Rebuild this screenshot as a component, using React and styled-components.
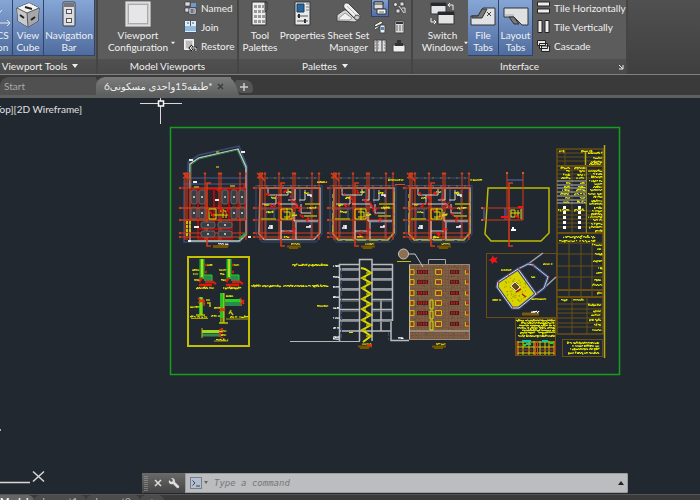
import React from 'react';
import styled, { createGlobalStyle, css } from 'styled-components';

const GlobalStyle = createGlobalStyle`
  * {
    box-sizing: border-box;
  }

  body {
    margin: 0;
    overflow: hidden;
    background: #212830;
    font-family: Lato, "DejaVu Sans", sans-serif;
    font-size: 10px;
    line-height: 12px;
    color: #f0f0f0;
  }

  button, input {
    font: inherit;
    color: inherit;
    margin: 0;
    padding: 0;
    border: 0;
    background: none;
  }

  svg {
    display: block;
    flex: none;
  }
`;

const Window = styled.div`
  display: flex;
  flex-direction: column;
  height: 100vh;
  overflow: hidden;
`;

/* ---------- ribbon ---------- */

const Ribbon = styled.header`
  display: flex;
  flex: none;
  height: 75px;
  background: linear-gradient(#505050, #3f3f3f);
  border-bottom: 1px solid #808080;
`;

const Panel = styled.section`
  display: flex;
  flex-direction: column;
  flex: none;
  width: ${({ $width }) => $width}px;
  margin-left: ${({ $cut }) => ($cut ? -$cut : 0)}px;
  background: #5c5c5c;
  border-right: 2px solid #454545;
`;

const PanelBody = styled.div`
  display: flex;
  flex: 1;
  padding-left: ${({ $indent }) => $indent || 0}px;
`;

const PanelTitle = styled.div`
  display: flex;
  align-items: center;
  justify-content: center;
  gap: 5px;
  height: 15px;
  padding: 0 0 2px ${({ $indent }) => $indent || 0}px;
  position: relative;
  background: linear-gradient(#505050, #4a4a4a);
`;

const Launcher = styled.button`
  position: absolute;
  right: 2px;
  top: 5px;
`;

const BigButton = styled.button`
  display: flex;
  flex-direction: column;
  align-items: center;
  flex: none;
  position: relative;
  width: ${({ $width }) => $width}px;
  height: 56px;
  padding-left: ${({ $indent }) => $indent || 0}px;
  white-space: nowrap;

  ${({ $active }) => $active && css`
    background: linear-gradient(#86a6d6, #4e6c9e);
    border-right: 1px solid #2f4468;
    border-bottom: 1px solid #2f4468;
  `}
`;

const BigIcon = styled.span`
  display: flex;
  height: 29px;
  padding-top: 1px;
`;

const MenuArrow = styled.span`
  position: absolute;
  right: ${({ $right }) => $right || 0}px;
  top: 41px;
`;

const SmallColumn = styled.div`
  display: flex;
  flex-direction: column;
  align-items: flex-start;
  margin-left: ${({ $left }) => $left || 0}px;
  margin-top: -2px;
`;

const SmallButton = styled.button`
  display: flex;
  align-items: center;
  gap: 4px;
  height: 19px;
  padding: 0 2px;
  white-space: nowrap;

  ${({ $active }) => $active && css`
    background: linear-gradient(#86a6d6, #4e6c9e);
    box-shadow: inset 0 0 0 1px #2f4468;
  `}
`;

/* ---------- file tabs ---------- */

const FileTabs = styled.nav`
  display: flex;
  align-items: flex-end;
  flex: none;
  height: 23px;
  background: #3a3a3a;
  border-bottom: 3px solid #5e6060;
`;

const FileTab = styled.div`
  display: flex;
  align-items: center;
  position: relative;
  z-index: ${({ $active }) => ($active ? 1 : 0)};
  height: 18px;
  width: ${({ $width }) => $width}px;
  padding-left: ${({ $active }) => ($active ? 8 : 4)}px;
  gap: 4px;
  color: ${({ $active }) => ($active ? '#f0f0f0' : '#a8a8a8')};
  background: ${({ $active }) => ($active ? 'linear-gradient(#7b7b7b, #5e6060)' : '#505050')};
  border-radius: 9px 0 0 0;

  &::after {
    content: '';
    position: absolute;
    top: 0;
    right: -5px;
    width: 14px;
    height: 18px;
    z-index: -1;
    background: inherit;
    border-radius: 0 7px 0 0;
    transform: skewX(20deg);
  }
`;

const TabName = styled.button`
  white-space: nowrap;
`;

const NewTab = styled.button`
  display: flex;
  align-items: center;
  justify-content: center;
  width: 18px;
  height: 13px;
  margin: 0 0 2px 4px;
  border-radius: 3px 8px 3px 8px;
  background: #555;
`;

/* ---------- drawing area ---------- */

const Canvas = styled.main`
  flex: 1;
  min-height: 0;
  position: relative;
  overflow: hidden;
  background: #212830;
`;

const ViewLabel = styled.div`
  position: absolute;
  left: -18px;
  top: 5px;
  color: #e0e0e0;
  white-space: nowrap;
`;

const CommandBar = styled.form`
  display: flex;
  position: absolute;
  left: 142px;
  right: 72px;
  bottom: 1px;
  height: 20px;
  background: #bcbdbf;
  border-radius: 2px;
  overflow: hidden;
`;

const CommandTools = styled.div`
  display: flex;
  align-items: center;
  gap: 6px;
  width: 43px;
  padding-left: 2px;
  background: linear-gradient(#6a6a6a, #444);
`;

const CommandField = styled.label`
  display: flex;
  align-items: center;
  flex: 1;
  gap: 6px;
  padding: 0 3px 0 4px;
  border: 1px solid #9a9c9e;
`;

const CommandInput = styled.input`
  flex: 1;
  min-width: 0;
  font: italic 9px/12px "DejaVu Sans Mono", monospace;
  color: #333;
  outline: none;

  &::placeholder {
    color: #777;
    opacity: 1;
  }
`;

const LayoutTabs = styled.footer`
  display: flex;
  flex: none;
  height: 6px;
  overflow: hidden;
  background: #3a3a3a;
  border-top: 1px solid #555;
`;

const LayoutTab = styled.button`
  flex: none;
  height: 12px;
  width: ${({ $width }) => $width}px;
  padding-right: ${({ $active }) => ($active ? 8 : 0)}px;
  color: ${({ $active }) => ($active ? '#fff' : '#bbb')};
  font-weight: ${({ $active }) => ($active ? 700 : 400)};
  background: ${({ $active }) => ($active ? '#666' : '#4c4c4c')};
  border-radius: ${({ $active }) => ($active ? 0 : 6)}px 6px 0 0;
`;

/* ---------- icons ---------- */

const Down = ({ size = 6 }) => (
  <svg width={size} height="4" viewBox="0 0 6 4"><path d="M0 0h6L3 4z" fill="#eee" /></svg>
);

const UcsIcon = () => (
  <svg width="28" height="27" viewBox="0 0 28 27" fill="none" stroke="#e8e8e8">
    <path d="M5 4v18h20M22 19l3 3-3 3M5 22L17 9" />
  </svg>
);

const CubeIcon = () => (
  <svg width="26" height="27" viewBox="0 0 26 27">
    <path d="M2 7l12-5 10 5-1 13-10 6-10-6z" fill="#ddd" stroke="#333" />
    <path d="M2 7l10 5 1 14-10-6z" fill="#c7c9cc" />
    <path d="M12 12l12-5-1 13-10 6z" fill="#a5a7aa" />
    <path d="M2 7l12-5 10 5-12 5z" fill="#f4f4f4" />
    <path d="M2 7l10 5 12-5M12 12l1 14" fill="none" stroke="#555" />
    <path d="M10 6l7 2M5 14l4 3M16 19l4-3" stroke="#222" strokeWidth="2" />
  </svg>
);

const NavIcon = () => (
  <svg width="14" height="27" viewBox="0 0 14 27">
    <rect x="1" y="1" width="12" height="24" rx="1" fill="#dcdde0" stroke="#35383d" />
    <path d="M2 2h10v4H2z" fill="#73777d" />
    <g fill="#eee" stroke="#555"><rect x="4.500" y="8.500" width="5" height="4" /><rect x="4.500" y="17.500" width="5" height="4" /></g>
  </svg>
);

const ViewportIcon = () => (
  <svg width="26" height="27" viewBox="0 0 26 27">
    <rect x="1" y="1" width="24" height="24" fill="#c9cacc" stroke="#f3f3f3" />
    <rect x="3.500" y="3.500" width="19" height="19" fill="#e6e6e8" stroke="#aaa" />
  </svg>
);

const NamedIcon = () => (
  <svg width="13" height="14" viewBox="0 0 13 14">
    <path d="M1 1h5v4H1zM1 7h4v4H1z" fill="#d7dce2" stroke="#333" strokeWidth=".6" />
    <path d="M7 2h5v4H7z" fill="#6b9bc9" /><path d="M5 7h7v6H5z" fill="#eee" stroke="#334" strokeWidth=".7" />
    <path d="M6 9h5M6 11h5M8 8v4" stroke="#3d4c60" />
  </svg>
);

const JoinIcon = () => (
  <svg width="13" height="13" viewBox="0 0 13 13">
    <path d="M.5.5h12v12H.5z" fill="#e8edf2" stroke="#46576b" />
    <path d="M1 6h11v5H1z" fill="#8dbce0" /><path d="M6.500 1v5M3 3h2M8 3h2" stroke="#46576b" />
  </svg>
);

const RestoreIcon = () => (
  <svg width="13" height="13" viewBox="0 0 13 13">
    <path d="M.5.500h9v10h-9z" fill="#ddd" stroke="#f4f4f4" /><path d="M2 2h6v7H2z" fill="#bbb" />
    <path d="M12 12V9H6M8.500 6.500L6 9l2.500 2.500" fill="none" stroke="#222" strokeWidth="2.500" />
    <path d="M12 12V9H6M8.500 6.500L6 9l2.500 2.500" fill="none" stroke="#eee" />
  </svg>
);

const PaletteIcon = () => (
  <svg width="18" height="26" viewBox="0 0 18 26">
    <path d="M1 1h14v23H1z" fill="#ececec" stroke="#333" /><path d="M14 1h2v8l-2 2z" fill="#777" stroke="#333" />
    {[4, 9, 14, 19].map((y) => [3, 7, 11].map((x) => (
      <rect key={`${x}-${y}`} x={x} y={y} width="3" height="3" fill="#999" />
    )))}
  </svg>
);

const PropertiesIcon = () => (
  <svg width="18" height="26" viewBox="0 0 18 26">
    <path d="M1 1h15v23H1z" fill="#e9e9e9" stroke="#333" />
    <path d="M3 3h7v8H3z" fill="#29669d" stroke="#173b60" /><path d="M12 3h3M12 6h3M12 9h3" stroke="#777" />
    <path d="M3 15h11M3 20h11" stroke="#555" /><path d="M5 13v4M11 18v4" stroke="#234" strokeWidth="2" />
  </svg>
);

const SheetIcon = () => (
  <svg width="26" height="26" viewBox="0 0 26 26">
    <path d="M1 20V14l7-5h4l12 9-5 3z" fill="#d2d4d7" stroke="#444" />
    <path d="M3 17l6-5 7 5-2 2H3z" fill="#f2f2f2" stroke="#999" />
    <path d="M8 4c0-2 3-3 5-1l11 11c1 3-1 5-4 5L9 8C8 7 7 5 8 4z" fill="#f0f0f0" stroke="#444" />
    <path d="M11 5l11 11M9 7l11 11" stroke="#b4b6b9" /><circle cx="21" cy="16.500" r="2.500" fill="#c4c6c9" stroke="#555" />
  </svg>
);

const SwitchIcon = () => (
  <svg width="26" height="27" viewBox="0 0 26 27">
    <g stroke="#333" fill="#e2e3e5"><path d="M1 2h15v11H1z" /><path d="M8 11h16v12H8z" /></g>
    <path d="M1 2h15v3H1zM8 11h16v3H8z" fill="#25282c" />
    <path d="M18 4h5v5M20 2l-2 2 2 2M1 17v4h5M4 19l2 2-2 2" fill="none" stroke="#eee" />
  </svg>
);

const FileTabIcon = () => (
  <svg width="26" height="27" viewBox="0 0 26 27">
    <path d="M1 24v-9h7l5-8h12v17z" fill="#e1e2e4" stroke="#333" />
    <path d="M2 15h6l4-7h5l-5 9H2z" fill="#777" stroke="#333" />
    <path d="M17 11l4 4M21 11l-4 4" stroke="#444" />
  </svg>
);

const LayoutTabIcon = () => (
  <svg width="26" height="27" viewBox="0 0 26 27">
    <path d="M1 7h24v17h-6l-8-8H1z" fill="#dfe0e2" stroke="#333" />
    <path d="M6 16h5l5 7h-5z" fill="#777" stroke="#333" /><path d="M2 14h9" stroke="#aaa" />
  </svg>
);

const Tile = ({ vertical }) => (
  <svg width="13" height="13" viewBox="0 0 13 13">
    <g transform={vertical ? 'rotate(90 6.500 6.500)' : undefined} fill="#eee" stroke="#222">
      <path d="M.5 1h12v4H.5zM.5 8h12v4H.5z" />
    </g>
  </svg>
);

const CascadeIcon = () => (
  <svg width="13" height="13" viewBox="0 0 13 13" fill="#e6e6e6" stroke="#222">
    <path d="M.5 1.500h8v5h-8zM2.500 4.500h8v5h-8zM4.500 7h8v5.500h-8z" />
  </svg>
);

const paletteIcons = [
  <><path d="M1 1h9v7H1z" fill="#ddd" stroke="#333" /><path d="M1 1h9v2H1zM4 8h9v5H4z" fill="#f4f4f4" stroke="#333" /><path d="M6 11h5" stroke="#666" /></>,
  <><path d="M1 3l3-2 2 3-3 2zM8 1h4v4H8zM4 8h4v4H4z" fill="#ddd" stroke="#444" /><path d="M7 5l5 7M10 7h3v5" stroke="#ddd" fill="none" /></>,
  <><path d="M1 5l7-4 2 2-7 4zM1 8l5-3v2L2 10z" fill="#eee" stroke="#444" /><path d="M7 5h5v8H7z" fill="#eee" stroke="#444" /><path d="M8 7h3v3H8z" fill="#4a88c4" /></>,
  <><path d="M3 1h9v12H3z" fill="#ddd" stroke="#444" /><path d="M4 3h7" stroke="#333" strokeWidth="2" /><path d="M4 6h7M4 8h7M4 10h7" stroke="#666" strokeDasharray="2 1" /></>,
  <><path d="M1 1h12v12H1z" fill="#ddd" stroke="#444" /><path d="M4 1v12M9 1v12" stroke="#444" /><path d="M2 3h10M2 6h10M2 9h10" stroke="#777" strokeDasharray="1 2" /></>,
  <><path d="M1 6h12v7H1z" fill="#eee" stroke="#444" /><path d="M5 1h4v3h2v3H3V4h2z" fill="#333" /></>,
];

const MiniPalette = ({ index }) => (
  <svg width="14" height="14" viewBox="0 0 14 14">{paletteIcons[index]}</svg>
);

/* ---------- CAD drawing ---------- */

const YELLOW = '#dede00';
const RED = '#d93a16';
const BROWN = '#6b4e10';
const BLUE = '#3b4a78';
const WHITE = '#d4d4d4';

const rng = (seed) => {
  let s = seed * 7919 + 17;
  return () => {
    s = (s * 16807) % 2147483647;
    return s / 2147483647;
  };
};

// annotation too small to resolve at this zoom level, drawn as pen marks
const Note = ({ x, y, w, h = 2, color = YELLOW, seed }) => {
  const next = rng(seed || Math.round(x * 3 + y * 5));
  let d = '';
  for (let i = 0; i < w; i += 1) {
    const r = next();
    if (r > 0.08) {
      d += `M${x + i} ${(y + (next() - 0.5) * h * 0.4).toFixed(1)}h1.200`;
    }
    if (r > 0.65) {
      d += `M${x + i} ${(y + (next() - 0.5) * h).toFixed(1)}h1.500`;
    }
  }
  return <path d={d} stroke={color} strokeWidth="1.200" fill="none" />;
};

const Notes = ({ x, w, rows, h, color }) => rows.map((y, i) => {
  const cut = (i * 5) % 7;
  return <Note key={y} x={x + cut} y={y} w={w - cut} h={h} color={color} />;
});

const Caption = ({ x, y }) => (
  <g>
    <Note x={x + 4} y={y - 1} w={9} color="#c4bf00" />
    <path d={`M${x} ${y + 1.5}h14M${x + 2} ${y + 3}h9`} stroke="#765400" strokeWidth="2" />
  </g>
);

const Axes = ({ x, cols }) => (
  <g stroke={RED} fill="none">
    <path d={cols.map((c) => `M${x + c} 174V240`).join('')} />
    <path d={[188, 208, 220, 233, 237].map((y) => `M${x} ${y}H${x + 65}`).join('')} />
    <g fill="#ff6a48">
      {cols.map((c) => <circle key={c} cx={x + c} cy="173.500" r=".8" />)}
      {[188, 208, 220, 233, 237].map((y) => <circle key={y} cx={x} cy={y} r=".8" />)}
    </g>
    <path d={`M${x + 3} 173l5 5M${x + 3} 178l6-4M${x + 7} 176l4 5`} strokeWidth="1.500" />
    <path d={`M${x + 31} 183h-4V246h4`} strokeWidth="1.500" />
  </g>
);

const axisCols = [6, 8, 11, 25, 39, 41, 58, 65];

const FloorPlan = ({ x, seed, trim }) => {
  const next = rng(seed);
  const marks = [];
  const spots = [[12, 192], [20, 194], [27, 190], [35, 196], [40, 202], [28, 208], [33, 215], [46, 212], [50, 217], [38, 226], [30, 230], [16, 203], [44, 207], [22, 200]];
  spots.forEach(([sx, sy]) => {
    for (let i = 0; i < 3; i += 1) {
      marks.push(`M${(x + sx + next() * 4).toFixed(1)} ${(sy + next() * 4).toFixed(1)}l${(next() * 3).toFixed(1)} ${(next() * 3).toFixed(1)}`);
    }
  });
  return (
    <g fill="none">
      <path d={`M${x + 4} 178H${x + 66}M${x + 3} 185.500H${x + 68}V234L${x + 62} 242H${x + 8}L${x + 2} 234V185`} stroke={BLUE} />
      <path d={`M${x + 4} 178H${x + 66}M${x + 4} 186H${x + 66}`} stroke="#8b701c" strokeDasharray="2 6" />
      <path d={`M${x + 6} 188H${x + 66}V233L${x + 60} 239.500H${x + 10}L${x + 5} 234Z`} stroke="#b5a89c" strokeWidth="1.500" />
      {trim && <path d={`M${x + 66} 192V233l-6 7H${x + 10}l-5-6v-40`} stroke="#b0ac28" strokeWidth="1.500" strokeDasharray="9 3" />}
      <path d={`M${x + 12} 207v30M${x + 20} 209v10M${x + 57} 190v48M${x + 38} 189v18M${x + 46} 189v14M${x + 7} 209h16M${x + 42} 222h22`} stroke="#4b5c94" />
      <Axes x={x} cols={axisCols} />
      <path d={`M${x + 14} 189v6h8v9h-14M${x + 22} 195h12v-6M${x + 34} 200h7v-11M${x + 45} 200h6v-10M${x + 24} 204h19v4M${x + 47} 204v9h10M${x + 58} 204h8M${x + 40} 212v9h24M${x + 27} 221v18M${x + 42} 222v17M${x + 40} 231h-13`} stroke={WHITE} />
      <path d={marks.join('')} stroke="#e81818" strokeWidth="1.500" />
      <path d={`M${x + 27} 209h11v10h-11zM${x + 30} 212h6v5h-6M${x + 33} 208v12`} stroke={YELLOW} />
      <path d={`M${x + 51} 204h14M${x + 7} 219h15M${x + 50} 216h13`} stroke="#918b12" strokeWidth="2" />
      <Note x={x + 17} y={198} w={5} /><Note x={x + 32} y={192} w={5} />
      <Note x={x + 12} y={212} w={7} /><Note x={x + 53} y={208} w={9} />
      <Note x={x + 29} y={237} w={6} /><Note x={x + 10} y={205} w={5} />
      <Note x={x + 50} y={193} w={5} /><Note x={x + 38} y={215} w={5} />
      <path d={`M${x + 14} 228h4v-3M${x + 15} 226h3v3M${x + 53} 195h4v2M${x + 52} 227h4v-2`} stroke="#fff" strokeWidth="1.500" />
      <Caption x={x + 33} y={245} />
    </g>
  );
};

const cars = [
  [191, 190, 6, 14], [199, 190, 6, 14], [222, 190, 6, 14], [231, 190, 6, 14], [239, 190, 6, 14],
  [191, 207, 6, 12], [199, 207, 6, 12], [231, 207, 6, 12], [239, 207, 6, 12],
  [201, 222, 14, 6], [218, 222, 14, 6], [201, 231, 14, 6], [218, 231, 14, 6],
];

const ParkingPlan = () => (
  <g fill="none">
    <path d="M188 188V162l11-7 40-9 8 20v68l-7 8H184V180M183 178h63M184 184h62" stroke={BLUE} strokeWidth="1.500" />
    <path d="M190 187V164l9-6 39-9 8 18v68l-7 6h-49z" stroke="#b8ccbc" strokeWidth="1.500" />
    <path d="M191 187V165l8-6 38-9 8 18" stroke="#2d7c4c" />
    <path d="M190 189h55v30h-13v20h-34v-19h-8z" fill="#2a2226" stroke="#a20f0f" strokeWidth="2" />
    <path d="M198 189v30M206 189v30M214 189v49M229 189v31M238 189v30M198 229h34" stroke="#a20f0f" strokeWidth="2" />
    <Axes x={180} cols={[5, 7, 10, 25, 39, 41, 60, 66]} />
    {cars.map(([x, y, w, h]) => (
      <g key={`${x}-${y}`}>
        <rect x={x} y={y} width={w} height={h} rx="2" fill="#3a3e41" stroke="#62666a" />
        <path d={`M${x + w / 2 - 1} ${y + h / 2}h2`} stroke="#dcdcdc" strokeWidth="1.500" />
      </g>
    ))}
    <path d="M180 208h66M180 220h66" stroke={RED} />
    <path d="M209 209h7v10h-7zM220 211h6v7M211 215h17M223 209v9" stroke={YELLOW} />
    <path d="M209 210l5 7M218 205l5 7M229 207l-4 8M244 183v5M215 188l5 4" stroke="#e11313" strokeWidth="1.500" />
    <path d="M187 221v15M190 221v12" stroke="#c4bf00" strokeWidth="2" strokeDasharray="3 1" />
    <path d="M189 160h4M241 152h4M193 182h4M188 241h3M215 200h4M194 227h5M248 237h3" stroke="#eee" strokeWidth="2" />
    <path d="M216 152h3M216 167h3M194 187h5M230 186h5" stroke="#b8a51a" strokeWidth="1.500" />
    <path d="M239 239l7-6" stroke="#28a743" strokeWidth="2" />
    <Note x={218} y={244} w={10} color={WHITE} /><path d="M213 246.500h15" stroke="#765400" strokeWidth="3" />
  </g>
);

const CorePlan = () => (
  <g fill="none">
    <path d="M488 188h61v45l-8 8h-50l-6-7 1-12z" stroke="#bcbc00" strokeWidth="1.500" />
    <path d="M507 180h16" stroke={BLUE} strokeWidth="2" />
    <path d="M505 208v12M510 208v12M522 208v12M484 208v12" stroke={BLUE} strokeWidth="2" />
    <path d="M507 173v47M523 173v47M482 208h41M482 220h41" stroke={RED} />
    <path d="M513 183h-4v63h4" stroke={RED} strokeWidth="1.500" />
    <g fill="#ff6a48"><circle cx="507" cy="173" r="1" /><circle cx="523" cy="173" r="1" /><circle cx="482" cy="208" r="1" /><circle cx="482" cy="220" r="1" /></g>
    <path d="M511 210h4v7h-4zM518 210v8M521 209v10M511 213h9" stroke={YELLOW} />
    <path d="M518 207h5M501 217h7M515 215l4 3" stroke="#f11" strokeWidth="2" />
    <path d="M511 230h5M513 227v3" stroke="#fff" strokeWidth="2" />
    <Note x={470} y={180} w={12} h={1} />
  </g>
);

const hrows = (ys, x1, x2) => ys.map((y) => `M${x1} ${y}H${x2}`).join('');

const Schedule = () => (
  <g fill="none">
    <g stroke={BROWN}>
      <rect x="557" y="149" width="46" height="185" strokeWidth="1.500" />
      <path d={hrows([153, 157, 161, 170, 174, 178, 211, 215, 219, 223, 227], 557, 603)} />
      <path d={hrows([166, 233, 290, 297], 557, 603)} strokeWidth="2" />
      <path d={hrows([243, 254, 266, 277, 304, 309, 313, 318, 323, 327], 557, 603)} />
      <path d="M565 149v17M572 166v67M586 166v67M569 243v54M581 243v54M592 243v54M572 297v37M587 297v37" />
    </g>
    <path d={hrows([181, 185, 188, 192, 196, 200, 203], 557, 586)} stroke="#b4b4b4" />
    <path d="M564.500 206v25M579.500 206v25" stroke="#fff" strokeWidth="3" strokeDasharray="3 2" />
    <path d="M604.500 145V358M585.500 151v14" stroke="#b3ad14" strokeWidth="1.500" />
    <path d="M586.500 167v66" stroke="#8d8518" />
    <Note x={559} y={151} w={5} /><Note x={581} y={151} w={11} />
    <Notes x={588} w={14} rows={[153, 158, 162, 164]} />
    <Notes x={588} w={14} rows={[171, 174, 177, 181, 184, 187, 190, 194, 197, 201, 204, 208, 211, 214, 217, 220, 224, 227, 231]} />
    <Notes x={560} w={10} rows={[168, 171, 175, 178, 183, 187, 190, 194, 198, 202]} />
    <Notes x={574} w={11} rows={[168, 171, 175, 178, 183, 187, 190, 194, 198, 202]} />
    <Note x={558} y={210} w={11} /><Note x={574} y={210} w={10} />
    <Note x={563} y={237} w={32} h={3} /><Note x={559} y={241} w={36} />
    <Notes x={592} w={10} rows={[245, 249, 254, 261, 268, 273, 280, 285, 293]} />
    <Note x={561} y={300} w={6} /><Note x={573} y={300} w={11} />
    <Notes x={588} w={13} rows={[305, 311, 315, 320, 325, 330]} />
    <rect x="562.500" y="339.500" width="40" height="17" stroke={BROWN} />
    <Notes x={567} w={32} rows={[343, 346, 349, 353]} h={2} />
  </g>
);

const speckle = (x, y, w, h, count, seed) => {
  const next = rng(seed);
  let d = '';
  for (let i = 0; i < count; i += 1) {
    d += `M${(x + next() * w).toFixed(1)} ${(y + next() * h).toFixed(1)}h1`;
  }
  return d;
};

const SitePlan = () => (
  <g fill="none">
    <rect x="486.500" y="253.500" width="70" height="64" stroke={BROWN} />
    <path d="M528 264l15-11M544 288l12-11" stroke="#a0a4a8" strokeWidth="1.500" />
    <path d="M518 269l10-5 5 1 15 12-4 11-8 6" stroke={BLUE} strokeWidth="3" />
    <path d="M518 269l10-5 5 1 15 12-4 11-8 6" stroke="#c4cad6" />
    <path d="M518 269l18 25-17 14h-7l-15-21 1-5z" fill="#d9d400" stroke={BLUE} strokeWidth="3" />
    <path d="M518 269l18 25-17 14h-7l-15-21 1-5z" stroke="#e0e0e0" />
    <path d={speckle(504, 278, 22, 24, 70, 8)} stroke="#969000" />
    <path d="M511 286l4-4 5 5-4 4z" fill="#6a4c1c" stroke="#ddd" />
    <path d="M516 292l5-3M522 294l4 3" stroke="#b01818" strokeWidth="1.500" />
    <path d="M498 282h1M508 275h1M518 269h1M533 265h1M548 277h1M536 294h1M512 308h1" stroke="#f33" strokeWidth="2" />
    <path d="M493 255l1 3 4-1-2 3 2 3-4-1-2 2-1-3-3-1 3-1z" fill="#f01414" />
    <Note x={501} y={270} w={10} h={1} /><Note x={543} y={264} w={9} h={1} /><Note x={490} y={300} w={11} h={1} /><Note x={531} y={299} w={15} h={1} />
    <Note x={531} y={277} w={4} />
    <path d="M522 314h17" stroke="#7c5a10" strokeWidth="3" /><Note x={531} y={312} w={8} h={3} color="#fff" />
    <rect x="515.500" y="318.500" width="40" height="37" stroke={BROWN} />
    <Notes x={516} w={39} rows={[320.5, 323, 325.5, 328, 330.5, 332.5, 336]} h={2} />
    <path d="M517 342h38M517 347h38M517 353h38M518 341v14M523 341v14M529 341v14M534 341v14M540 341v14M545 341v14M549 341v14M554 341v14" stroke="#d7c900" />
    <path d="M517 341v14M535.500 341v14M537.500 341v14M554.500 341v14" stroke="#e04a12" />
    <path d="M518 350h14M541 350h13M518 345h8" stroke="#a93a12" />
    <path d="M522 341h9M542 341h6M526 344h5" stroke="#10c89a" strokeWidth="2" />
    <path d="M523 345h3M550 343h3" stroke="#1be01b" strokeWidth="2" />
  </g>
);

const WallDetail = ({ x }) => (
  <g>
    <path d={`M${x + 3} 259v20`} stroke="#24c024" strokeWidth="5" />
    <path d={`M${x + 3} 259v18`} stroke="#b5d818" strokeWidth="2" />
    <path d={`M${x + 5} 278h8`} stroke="#2b8a4b" strokeWidth="6" />
    <path d={`M${x + 5} 275h8v6`} stroke="#24d024" fill="none" />
    <path d={`M${x} 282l3-4M${x} 285h13M${x + 6} 282h8l3 2M${x + 6} 265h2M${x + 6} 272h2`} stroke="#d41c10" strokeWidth="2.500" fill="none" />
    <Note x={x + 8} y={265} w={5} h={1} /><Note x={x - 7} y={270} w={7} h={1} /><Note x={x - 6} y={274} w={5} h={1} />
    <Note x={x - 5} y={280} w={5} h={1} /><Note x={x - 3} y={288} w={18} />
  </g>
);

const Details = () => (
  <g fill="none">
    <rect x="188" y="257" width="61" height="89" stroke="#c4bf00" strokeWidth="2" />
    <WallDetail x={199} /><WallDetail x={226} />
    <path d="M201 297v18M222 293v30" stroke="#24c024" strokeWidth="4" />
    <path d="M201 297v18M224 293v30" stroke={YELLOW} />
    <path d="M225 300.500h17" stroke="#24d024" strokeWidth="3" /><path d="M225 304h17" stroke="#2b8a4b" strokeWidth="4" />
    <path d="M198 298l7 6M198 303l6-4M204 300v6M218 307l7 4M219 312l6-4M240 298l4 6M240 305l4-5M222 318v4" stroke="#ec2a12" strokeWidth="1.500" />
    <path d="M206 300h4M207 303h3v4M230 311l3 4M231 310l-2 4M196 315h9M219 323h9" stroke="#c4bf00" strokeWidth="1.500" />
    <Note x={190} y={307} w={9} h={1} /><Note x={211} y={316} w={9} h={1} /><Note x={213} y={308} w={7} h={1} /><Note x={226} y={296} w={7} h={1} />
    <Note x={190} y={317} w={17} /><Note x={230} y={317} w={18} /><path d="M226 319h23M191 318.500h17" stroke="#a9a200" />
    <path d="M202 331.500h19" stroke="#a4d820" strokeWidth="3" /><path d="M202 335h19" stroke="#338a50" strokeWidth="3" />
    <path d="M202 328v10" stroke="#c4bf00" /><path d="M220 329v8M222 328v10" stroke="#e52a12" strokeWidth="2" strokeDasharray="2 1" />
    <Note x={221} y={331} w={5} h={1} /><Note x={221} y={335} w={5} h={1} /><Note x={216} y={340} w={12} /><path d="M214 341h14" stroke="#a9a200" />
  </g>
);

const levels = [269, 279, 289, 299.5, 309.5, 320];

const Section = () => (
  <g fill="none">
    <Note x={290} y={265} w={38} /><Note x={251} y={286} w={77} /><Note x={317} y={306} w={11} h={1} />
    <path d="M290 341.500h70" stroke="#b5b5b5" />
    <g stroke="#b9bbbd" strokeWidth="1.500">
      <path d="M339.500 264v77M392.500 264v57M339 264.500h20M372 264.500h21M359.500 341V259.500h12.500V341M339 331h52M391 321v19.500h18M381 300v31" />
      <path d={levels.map((y) => `M339 ${y}h20M372 ${y}h21`).join('')} />
    </g>
    <path d={levels.map((y) => `M340 ${y + 1.5}h19M373 ${y + 1.5}h19`).join('')} stroke="#7b7e82" />
    <path d="M341.500 268v72M388.500 332v8" stroke={BLUE} strokeDasharray="4 2" />
    <path d="M361 268l4 1 6 4-9 5 9 5-9 5 9 6-9 5 9 5-9 5 9 6-9 5 9 5-9 5 9 6-8 6" stroke={YELLOW} strokeWidth="2" />
    <path d="M366 273h5M361 278h5M366 283h5M361 288h5M366 294h5M361 299h5M366 304h5M361 309h5M366 315h5M361 320h5M366 325h5M361 330h5M366 336h5" stroke="#b8b400" strokeWidth="1.500" />
    {[266, 277, 287, 297, 308, 318, 328, 337, 339].map((y) => <Note key={y} x={333} y={y} w={6} h={1} color="#eee" />)}
    <path d="M349 332.500h4" stroke={YELLOW} /><Note x={398} y={338} w={5} color="#fff" />
    <Caption x={358} y={345} /><path d="M367 345h5" stroke={RED} strokeWidth="2" />
  </g>
);

const Elevation = () => (
  <g fill="none">
    <path d="M428.500 264v-4.500h17v4.500" stroke="#a8a8a8" />
    <rect x="409" y="264" width="61" height="75" fill="#76573f" />
    <path d={hrows([266, 269, 272, 275, 278, 281, 284, 287, 290, 293, 296, 299, 302, 305, 308, 311, 314, 317, 320, 323, 326, 329, 334, 337], 410, 470)} stroke="#88694f" strokeDasharray="2 1" />
    <path d={speckle(410, 265, 59, 73, 260, 12)} stroke="#654833" />
    <path d="M409.500 264v76M409 331h61" stroke="#c1bbb4" />
    <path d="M409 264.500h61M409 339.500h61M469.500 264v76" stroke="#9a8878" />
    {[272, 282, 293, 303, 313, 324].map((y) => (
      <g key={y}>
        <path d={`M417 ${y}h11M450 ${y}h9`} stroke="#322" strokeWidth="4" />
        <path d={`M418 ${y}h10M451 ${y}h7M411 ${y}h3M437 ${y}h4M466 ${y}h3`} stroke="#c01818" strokeWidth="3" strokeDasharray="1.500 1" />
        <path d={`M410 ${y - 2.5}h4v5h-4zM435.500 ${y - 2.5}h6v5h-6zM465.500 ${y - 2}v4h3`} stroke="#c4c000" />
      </g>
    ))}
    <path d="M430 300h3v9h-3zM430 311h3v8h-3zM430 321h3v9h-3z" stroke={YELLOW} />
    <circle cx="403.500" cy="254" r="5" fill="#8d6e52" stroke="#c8c8c8" />
    <path d="M409 254h6l8 13" stroke="#c8c8c8" />
    <path d="M397 261.500h14" stroke="#c4bf00" />
    <Caption x={432} y={345} />
  </g>
);

const Drawing = () => (
  <svg width="700" height="396" viewBox="0 98 700 396" role="img" aria-label="Floor plans">
    <rect x="170.500" y="127.500" width="449" height="247" fill="none" stroke="#14a01c" strokeWidth="1.500" />
    <ParkingPlan />
    <FloorPlan x={254} seed={3} />
    <FloorPlan x={328} seed={5} trim />
    <FloorPlan x={404} seed={9} trim />
    <path d="M317 182.500h10M395 184.500h10" stroke="#f04020" />
    <Note x={388} y={180} w={15} h={1} /><Note x={317} y={182} w={10} h={1} />
    <CorePlan />
    <Schedule />
    <Details />
    <Section />
    <Elevation />
    <SitePlan />
    <g stroke="#d9d9d9" fill="none">
      <path d="M140 103.500h18M164 103.500h18M160.500 98v3M160.500 106v18" />
      <rect x="158.500" y="101" width="5" height="5" stroke="#fff" strokeWidth="1.500" />
      <path d="M0 482.500h30M33 471.500l11 10M44 471.500l-11 10M0 430h1" strokeWidth="1.500" />
    </g>
  </svg>
);

export default function App() {
  return (
    <Window>
      <GlobalStyle />
      <Ribbon>
        <Panel $width={122} $cut={24}>
          <PanelBody>
            <BigButton $width={37} $indent={10} $active><BigIcon><UcsIcon /></BigIcon>UCS<br />Icon</BigButton>
            <BigButton $width={31} $active><BigIcon><CubeIcon /></BigIcon>View<br />Cube</BigButton>
            <BigButton $width={51} $active><BigIcon><NavIcon /></BigIcon>Navigation<br />Bar</BigButton>
          </PanelBody>
          <PanelTitle $indent={8}>Viewport Tools <Down /></PanelTitle>
        </Panel>

        <Panel $width={141}>
          <PanelBody $indent={6}>
            <BigButton $width={68}>
              <BigIcon><ViewportIcon /></BigIcon>Viewport<br />Configuration
              <MenuArrow $right={-3}><Down size={4} /></MenuArrow>
            </BigButton>
            <SmallColumn $left={10}>
              <SmallButton><NamedIcon />Named</SmallButton>
              <SmallButton><JoinIcon />Join</SmallButton>
              <SmallButton><RestoreIcon />Restore</SmallButton>
            </SmallColumn>
          </PanelBody>
          <PanelTitle>Model Viewports</PanelTitle>
        </Panel>

        <Panel $width={174}>
          <PanelBody $indent={2}>
            <BigButton $width={38}><BigIcon><PaletteIcon /></BigIcon>Tool<br />Palettes</BigButton>
            <BigButton $width={47}><BigIcon><PropertiesIcon /></BigIcon>Properties</BigButton>
            <BigButton $width={45}><BigIcon><SheetIcon /></BigIcon>Sheet Set<br />Manager</BigButton>
            <SmallColumn>
              <SmallButton $active aria-label="Command Line"><MiniPalette index={0} /></SmallButton>
              <SmallButton aria-label="Markup"><MiniPalette index={2} /></SmallButton>
              <SmallButton aria-label="DesignCenter"><MiniPalette index={4} /></SmallButton>
            </SmallColumn>
            <SmallColumn $left={1}>
              <SmallButton aria-label="Layers"><MiniPalette index={1} /></SmallButton>
              <SmallButton aria-label="Calculator"><MiniPalette index={3} /></SmallButton>
              <SmallButton aria-label="References"><MiniPalette index={5} /></SmallButton>
            </SmallColumn>
          </PanelBody>
          <PanelTitle>Palettes <Down /></PanelTitle>
        </Panel>

        <Panel $width={215}>
          <PanelBody $indent={4}>
            <BigButton $width={51}>
              <BigIcon><SwitchIcon /></BigIcon>Switch<br />Windows
              <MenuArrow><Down size={4} /></MenuArrow>
            </BigButton>
            <BigButton $width={31} $active><BigIcon><FileTabIcon /></BigIcon>File<br />Tabs</BigButton>
            <BigButton $width={34} $active><BigIcon><LayoutTabIcon /></BigIcon>Layout<br />Tabs</BigButton>
            <SmallColumn $left={2}>
              <SmallButton><Tile />Tile Horizontally</SmallButton>
              <SmallButton><Tile vertical />Tile Vertically</SmallButton>
              <SmallButton><CascadeIcon />Cascade</SmallButton>
            </SmallColumn>
          </PanelBody>
          <PanelTitle>
            Interface
            <Launcher aria-label="Interface options">
              <svg width="6" height="6" viewBox="0 0 6 6"><path d="M1 1l4 4M5 1v4H1" fill="none" stroke="#eee" /></svg>
            </Launcher>
          </PanelTitle>
        </Panel>
      </Ribbon>

      <FileTabs>
        <FileTab $width={96}><TabName>Start</TabName></FileTab>
        <FileTab $width={135} $active>
          <TabName dir="rtl">*طبقه15واحدی مسکونی6</TabName>
          <button aria-label="Close tab">
            <svg width="7" height="7" viewBox="0 0 7 7"><path d="M1 1l5 5M6 1L1 6" stroke="#3c3c3c" strokeWidth="1.500" /></svg>
          </button>
        </FileTab>
        <NewTab aria-label="New drawing">
          <svg width="8" height="8" viewBox="0 0 8 8"><path d="M4 0v8M0 4h8" stroke="#ccc" strokeWidth="1.500" /></svg>
        </NewTab>
      </FileTabs>

      <Canvas>
        <Drawing />
        <ViewLabel>[-][Top][2D Wireframe]</ViewLabel>
        <CommandBar onSubmit={(e) => e.preventDefault()}>
          <CommandTools>
            <svg width="4" height="15" viewBox="0 0 4 15"><path d="M1 0v15M3 0v15" stroke="#aaa" strokeDasharray="1 1" /></svg>
            <button type="button" aria-label="Close">
              <svg width="8" height="8" viewBox="0 0 8 8"><path d="M1 1l6 6M7 1L1 7" stroke="#ddd" strokeWidth="1.500" /></svg>
            </button>
            <button type="button" aria-label="Customize">
              <svg width="12" height="12" viewBox="0 0 12 12"><path d="M3 1l2 2-1 2-2-1-1-1c-1 3 1 5 4 4l4 4c1 1 3-1 2-2L7 5c0-3-1-4-4-4z" fill="#ddd" /></svg>
            </button>
          </CommandTools>
          <CommandField>
            <svg width="18" height="12" viewBox="0 0 18 12">
              <rect x=".5" y=".5" width="11" height="11" fill="#b3bfcc" stroke="#76818d" />
              <path d="M2.500 3.500L5 6 2.500 8.500M6 9h4" fill="none" stroke="#3a4552" /><path d="M14 4h4l-2 3z" fill="#666" />
            </svg>
            <CommandInput placeholder="Type a command" aria-label="Command" />
            <svg width="6" height="4" viewBox="0 0 6 4"><path d="M0 4h6L3 0z" fill="#222" /></svg>
          </CommandField>
        </CommandBar>
      </Canvas>

      <LayoutTabs>
        <LayoutTab $width={34} $active>Model</LayoutTab>
        <LayoutTab $width={52}>Layout1</LayoutTab>
        <LayoutTab $width={54}>Layout2</LayoutTab>
        <LayoutTab $width={24} aria-label="New layout">+</LayoutTab>
      </LayoutTabs>
    </Window>
  );
}
